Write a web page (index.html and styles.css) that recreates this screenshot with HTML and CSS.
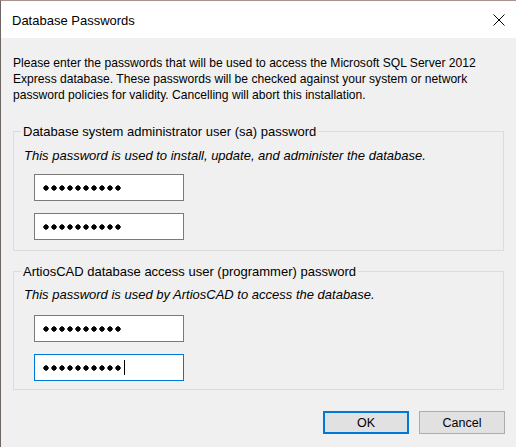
FILE: index.html
```html
<!DOCTYPE html>
<html>
<head>
<meta charset="utf-8">
<link rel="stylesheet" href="styles.css">
</head>
<body>
<div class="window">
  <div class="titlebar">
    <span class="title">Database Passwords</span>
    <svg class="close" width="12" height="12" viewBox="0 0 12 12"><path d="M0.5 0.5 L11.5 11.5 M11.5 0.5 L0.5 11.5" stroke="#000" stroke-width="1" fill="none"/></svg>
  </div>
  <div class="content">
    <p class="intro">Please enter the passwords that will be used to access the Microsoft SQL Server 2012<br>Express database. These passwords will be checked against your system or network<br>password policies for validity. Cancelling will abort this installation.</p>
    <fieldset class="group first">
      <legend>Database system administrator user (sa) password</legend>
      <p class="note">This password is used to install, update, and administer the database.</p>
      <div class="field"><span class="dots"></span></div>
      <div class="field"><span class="dots"></span></div>
    </fieldset>
    <fieldset class="group second">
      <legend>ArtiosCAD database access user (programmer) password</legend>
      <p class="note">This password is used by ArtiosCAD to access the database.</p>
      <div class="field"><span class="dots"></span></div>
      <div class="field focus"><span class="dots"></span><span class="caret"></span></div>
    </fieldset>
    <div class="buttons">
      <button class="btn default">OK</button>
      <button class="btn">Cancel</button>
    </div>
  </div>
</div>
</body>
</html>
```
FILE: styles.css
```css
html, body {
  margin: 0;
  padding: 0;
  background: #f0f0f0;
}
.window {
  width: 515px;
  height: 446px;
  border-left: 1px solid #6e6662;
  border-top: 1px solid #a9928a;
  background: #f0f0f0;
  font-family: "Liberation Sans", Arial, sans-serif;
  font-size: 12px;
  color: #000;
  overflow: hidden;
}
.titlebar {
  height: 37px;
  background: #fff;
  display: flex;
  align-items: center;
  justify-content: space-between;
  padding: 0 11px 0 11px;
}
.title {
  font-size: 13px;
  line-height: 16px;
  margin-top: 2px;
}
.close {
  display: block;
}
.content {
  padding: 0 12px 0 12px;
}
.intro {
  margin: 17px 0 0 0;
  line-height: 16px;
  font-size: 12.1px;
}
.group {
  margin: 0;
  border: 1px solid #dcdcdc;
  padding: 0 0 0 10px;
  font-size: 13px;
}
.group.first {
  margin-top: 20.5px;
  padding-bottom: 10px;
}
.group.second {
  margin-top: 12.5px;
  padding-bottom: 8px;
}
.group legend {
  padding: 0 2px;
  margin-left: -3px;
  line-height: 16px;
}
.note {
  font-style: italic;
  line-height: 16px;
}
.group.first .note { margin: 8.5px 0 0 0; }
.group.second .note { margin: 7.5px 0 0 0; }
.field {
  width: 140px;
  height: 25px;
  background: #fff;
  border: 1px solid #7a7a7a;
  margin-left: 10px;
  display: flex;
  align-items: center;
  padding-left: 8px;
  box-sizing: content-box;
}
.group.first .note + .field { margin-top: 10px; }
.group.second .note + .field { margin-top: 12px; }
.field + .field { margin-top: 12px; }
.field.focus {
  border-color: #0078d7;
}
.dots {
  display: block;
  width: 80px;
  height: 6px;
  background: radial-gradient(circle at 3px 3px, #000 2.4px, transparent 2.9px) 0 0 / 8px 6px repeat-x;
}
.caret {
  display: block;
  width: 1px;
  height: 15px;
  background: #000;
  margin-left: 1px;
}
.buttons {
  display: flex;
  justify-content: flex-end;
  gap: 10px;
  margin-top: 21px;
  margin-right: -1px;
}
.btn {
  width: 86px;
  height: 23px;
  margin: 0;
  padding: 0;
  background: #e1e1e1;
  border: 1px solid #adadad;
  font-family: "Liberation Sans", Arial, sans-serif;
  font-size: 12.5px;
  color: #000;
}
.btn.default {
  border: 2px solid #0078d7;
}
```
